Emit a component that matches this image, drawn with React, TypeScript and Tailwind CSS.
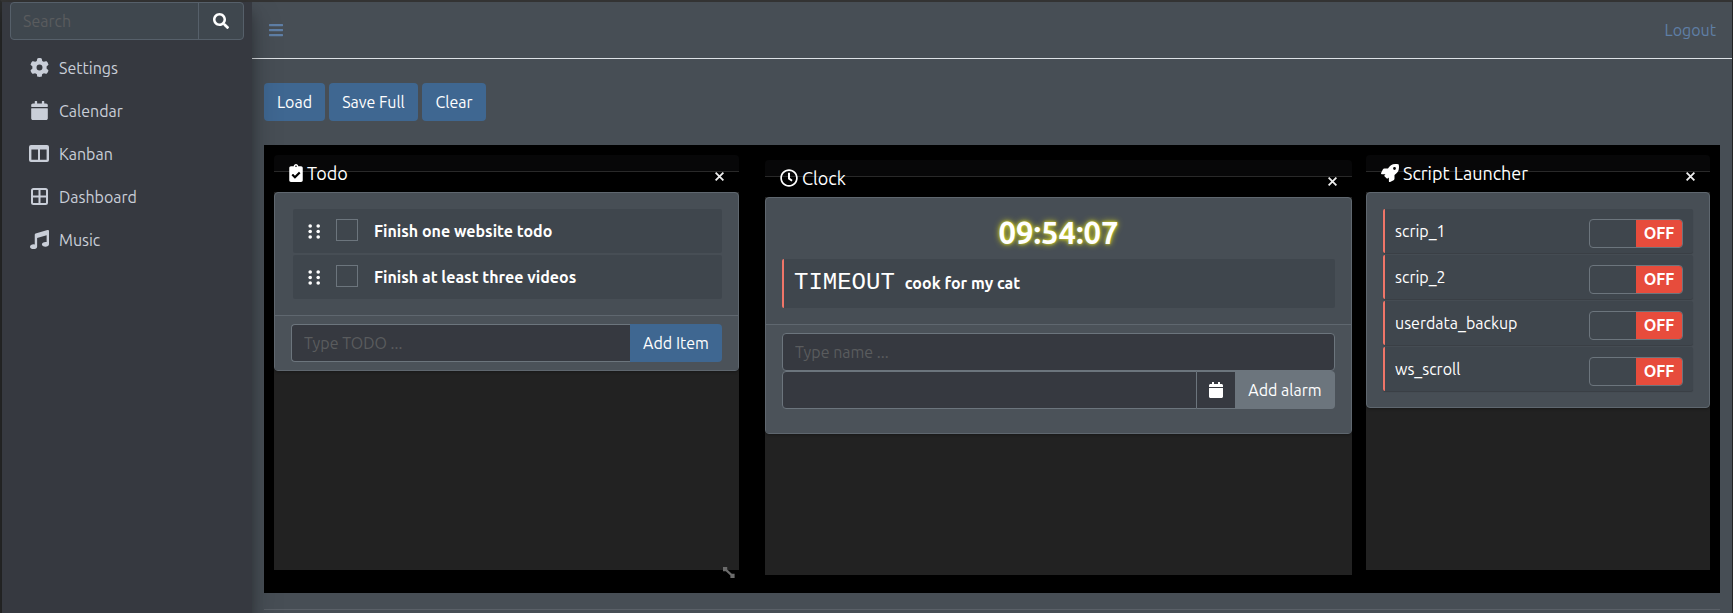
import { useState, type ReactNode } from "react";
import {
  FaBars,
  FaCalendar,
  FaClipboardCheck,
  FaMusic,
  FaRegClock,
  FaRocket,
  FaSearch,
} from "react-icons/fa";
import { FaGear } from "react-icons/fa6";

function KanbanIcon() {
  return (
    <svg width="20" height="17" viewBox="0 0 20 17" aria-hidden="true">
      <path
        fill="currentColor"
        fillRule="evenodd"
        d="M2 0H18Q20 0 20 2V15Q20 17 18 17H2Q0 17 0 15V2Q0 0 2 0ZM2.4 4.4V14.8H9V4.4ZM11 4.4V14.8H17.6V4.4Z"
      />
    </svg>
  );
}

function DashboardIcon() {
  return (
    <svg width="17" height="17" viewBox="0 0 17 17" fill="none" stroke="currentColor" strokeWidth="2" aria-hidden="true">
      <rect x="1" y="1" width="15" height="15" rx="1.5" />
      <path d="M8.5 1V16M1 8.5H16" />
    </svg>
  );
}

const navItems = [
  { label: "Settings", icon: <FaGear size={19} /> },
  { label: "Calendar", icon: <FaCalendar size={19} /> },
  { label: "Kanban", icon: <KanbanIcon /> },
  { label: "Dashboard", icon: <DashboardIcon /> },
  { label: "Music", icon: <FaMusic size={19} /> },
];

const todos = ["Finish one website todo", "Finish at least three videos"];
const scripts = ["scrip_1", "scrip_2", "userdata_backup", "ws_scroll"];

function Grip() {
  return (
    <svg width="13" height="15" viewBox="0 0 13 15" fill="#fff" aria-hidden="true">
      {[2, 7.5, 13].map((y) => (
        <g key={y}>
          <circle cx="2.2" cy={y} r="1.8" />
          <circle cx="10.2" cy={y} r="1.8" />
        </g>
      ))}
    </svg>
  );
}

function Sidebar() {
  return (
    <aside className="relative z-10 w-[250px] shrink-0 bg-[#363940] px-2 shadow-[0_14px_28px_rgba(0,0,0,0.25),0_10px_10px_rgba(0,0,0,0.22)]">
      <form className="flex h-[38px] rounded border border-[#56606a] bg-[#3f474e]" onSubmit={(e) => e.preventDefault()}>
        <input
          type="search"
          aria-label="Search"
          placeholder="Search"
          className="min-w-0 flex-1 bg-transparent px-3 text-white outline-none placeholder:text-[#5a5c5e]"
        />
        <button type="submit" aria-label="Submit search" className="flex w-[45px] items-center justify-center border-l border-[#56606a] text-white">
          <FaSearch size={16} />
        </button>
      </form>
      <nav className="mt-2 flex flex-col gap-[3px]">
        {navItems.map((item) => (
          <a key={item.label} href="#" className="flex h-10 items-center px-[15px] text-[#c9ced8]">
            <span className="mr-1.5 flex w-7 justify-center pb-0.5">{item.icon}</span>
            <span>{item.label}</span>
          </a>
        ))}
      </nav>
    </aside>
  );
}

function Widget({ title, icon, className, resizable, children }: {
  title: string;
  icon: ReactNode;
  className: string;
  resizable?: boolean;
  children: ReactNode;
}) {
  return (
    <section className={`relative flex h-[415px] min-w-0 flex-col bg-[#222] ${className}`}>
      <header className="relative flex h-[37px] shrink-0 items-center justify-between bg-black pr-3.5 pb-px pl-[15px] text-white">
        <div className="absolute inset-x-0 top-0 h-[17px] rounded-t border-b border-[#292929] bg-[#070708]" />
        <h3 className="relative flex items-center gap-1 text-lg leading-6">
          {icon}
          {title}
        </h3>
        <button type="button" aria-label={`Close ${title}`} className="relative mt-1.5 flex size-3 items-center justify-center">
          <svg width="9" height="9" viewBox="0 0 9 9" stroke="#eee" strokeWidth="1.8" aria-hidden="true">
            <path d="M0.6 0.6 8.4 8.4M8.4 0.6 0.6 8.4" />
          </svg>
        </button>
      </header>
      <div className="rounded border border-[#5f676f] bg-[#474e55] shadow-[0_1px_3px_rgba(0,0,0,0.3)]">{children}</div>
      {resizable && (
        <svg className="absolute right-[3px] -bottom-[9px]" width="14" height="13" viewBox="0 0 14 13" fill="#6b6b6b" aria-hidden="true">
          <path d="M1 1H5.2V3.4L9.8 7.8H12.6V12H8.4V9.5L3.8 5.2H1Z" />
        </svg>
      )}
    </section>
  );
}

function TodoWidget() {
  return (
    <Widget title="Todo" icon={<FaClipboardCheck className="w-[14px]" size={18} />} className="mr-[26px] flex-[465]" resizable>
      <ul className="flex flex-col gap-0.5 p-4">
        {todos.map((todo) => (
          <li key={todo} className="ml-0.5 rounded-xs bg-[#3f464d]">
            <label className="flex h-11 items-center pr-4 pl-[15px] font-bold text-white">
              <Grip />
              <input type="checkbox" className="-mt-0.5 ml-[15px] size-[22px] appearance-none border border-[#6c757d] checked:bg-[#3f6791]" />
              <span className="ml-4">{todo}</span>
            </label>
          </li>
        ))}
      </ul>
      <form className="flex border-t border-[#5f676f] bg-[#4b5259] px-4 py-2" onSubmit={(e) => e.preventDefault()}>
        <input
          aria-label="New todo"
          placeholder="Type TODO ..."
          className="h-[38px] min-w-0 flex-1 rounded-l border border-r-0 border-[#6c757d] bg-[#363940] px-3 text-white outline-none placeholder:text-[#5a5c5e]"
        />
        <button type="submit" className="h-[38px] w-[92px] rounded-r bg-[#3f6791] text-white">Add Item</button>
      </form>
    </Widget>
  );
}

function ClockWidget() {
  return (
    <Widget title="Clock" icon={<FaRegClock size={18} />} className="mt-[5px] mr-[14px] flex-[587]">
      <div className="p-4">
        <time className="mb-2 block h-[37px] text-center text-[31px] leading-[37px] font-bold text-white [text-shadow:0_0_3px_#d8d820,0_0_6px_#d8d820]">
          09:54:07
        </time>
        <div className="flex h-[49px] items-baseline rounded-xs border-l-2 border-[#ef7568] bg-[#3f464d] pt-2 pl-2.5 text-white">
          <span className="font-['Liberation_Mono',monospace] text-2xl">TIMEOUT</span>
          <span className="ml-2.5 font-bold">cook for my cat</span>
        </div>
      </div>
      <form className="border-t border-[#5f676f] bg-[#4b5259] px-4 pt-2 pb-6" onSubmit={(e) => e.preventDefault()}>
        <input
          aria-label="Alarm name"
          placeholder="Type name ..."
          className="block h-[38px] w-full rounded border border-[#6c757d] bg-[#363940] px-3 text-white outline-none placeholder:text-[#5a5c5e]"
        />
        <div className="flex h-[38px]">
          <input
            aria-label="Alarm time"
            className="min-w-0 flex-1 rounded-l border border-[#6c757d] bg-[#363940] px-3 text-white outline-none"
          />
          <button type="button" aria-label="Pick date" className="flex w-[38px] items-center justify-center border-y border-[#6c757d] bg-[#363940] text-white">
            <FaCalendar size={16} />
          </button>
          <button type="submit" className="w-[100px] rounded-r bg-[#6c757d] text-white">Add alarm</button>
        </div>
      </form>
    </Widget>
  );
}

function ScriptSwitch({ name }: { name: string }) {
  const [on, setOn] = useState(false);
  return (
    <label className="relative flex h-[29px] w-[94px] cursor-pointer overflow-hidden rounded border border-[#6c757d]">
      <input
        type="checkbox"
        role="switch"
        aria-label={name}
        checked={on}
        onChange={() => setOn(!on)}
        className="absolute inset-0 size-full cursor-pointer opacity-0"
      />
      <span className={on ? "flex flex-1 items-center justify-center bg-[#3f6791] font-bold text-white" : "flex-1"}>{on && "ON"}</span>
      <span className={on ? "flex-1" : "flex flex-1 items-center justify-center bg-[#e74c3c] font-bold text-white"}>{!on && "OFF"}</span>
    </label>
  );
}

function ScriptWidget() {
  return (
    <Widget title="Script Launcher" icon={<FaRocket size={18} />} className="flex-[344]">
      <ul className="flex flex-col gap-0.5 p-4">
        {scripts.map((name) => (
          <li key={name} className="flex h-11 items-center justify-between rounded-xs border-l-2 border-[#ef7568] bg-[#3f464d] pr-2.5 pl-2.5 text-white shadow-[0_1px_1px_rgba(0,0,0,0.2)]">
            <span>{name}</span>
            <div className="pt-1">
              <ScriptSwitch name={name} />
            </div>
          </li>
        ))}
      </ul>
    </Widget>
  );
}

export default function App() {
  return (
    <div className="flex min-h-screen border-t-2 border-r border-l-2 border-t-[#333] border-r-[#222] border-l-[#2b2c2c] bg-[#474e55] font-[Ubuntu,'Noto_Sans',sans-serif] text-base leading-6">
      <Sidebar />
      <div className="min-w-0 flex-1">
        <header className="flex h-[57px] items-center justify-between border-b border-[#dee2e6] px-4 text-[#5f7fa6]">
          <button type="button" aria-label="Toggle menu">
            <FaBars size={16} />
          </button>
          <a href="#">Logout</a>
        </header>
        <main className="px-3 pt-6">
          <div className="flex gap-1 text-white">
            <button type="button" className="h-[38px] w-[61px] rounded bg-[#3f6791]">Load</button>
            <button type="button" className="h-[38px] w-[89px] rounded bg-[#3f6791]">Save Full</button>
            <button type="button" className="h-[38px] w-16 rounded bg-[#3f6791]">Clear</button>
          </div>
          <div className="relative z-20 mt-6 flex items-start bg-black px-2.5 pt-2.5 pb-[18px]">
            <TodoWidget />
            <ClockWidget />
            <ScriptWidget />
          </div>
          <hr className="mt-4 border-[#5a6067]" />
        </main>
      </div>
    </div>
  );
}
